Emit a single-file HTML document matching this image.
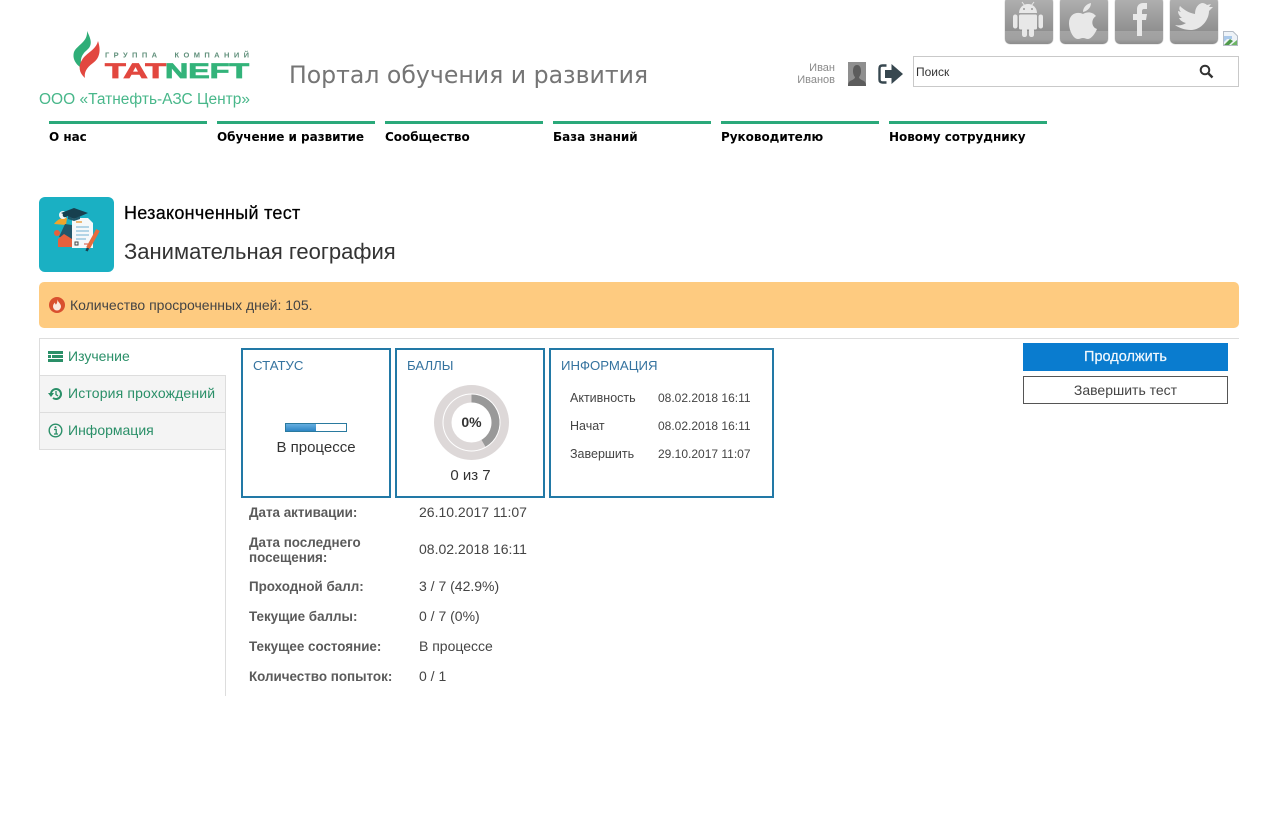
<!DOCTYPE html>
<html lang="ru"><head><meta charset="utf-8"><title>Портал обучения и развития</title>
<style>
html,body{margin:0;padding:0;background:#fff;width:1277px;height:817px;overflow:hidden}
body{position:relative;font-family:"Liberation Sans",sans-serif;color:#333}
.a{position:absolute;white-space:nowrap}
.bar{position:absolute;top:121px;width:158px;height:3px;background:#2aa97a}
.nav{position:absolute;top:128px;font:bold 12px/18px "DejaVu Sans",sans-serif;letter-spacing:-.03px;color:#000;white-space:nowrap}
.tile{position:absolute;top:-3px;width:48px;height:47px;border-radius:5px;background:linear-gradient(#b2b2b2 0,#909090 72%,#a4a4a4 72%,#a0a0a0 90%,#8c8c8c 100%);box-shadow:0 0 1px #888}
.tile svg{position:absolute;left:0;top:0}
.card{position:absolute;top:348px;height:146px;border:2px solid #2279a6;box-sizing:content-box}
.ct{position:absolute;top:358px;font-size:13.2px;line-height:16px;color:#35739f;white-space:nowrap}
.tab{position:absolute;left:39px;width:186px;height:36px;border-bottom:1px solid #ddd;border-left:1px solid #ddd;box-sizing:content-box;color:#2a8f68;font-size:14px;line-height:34px}
.tab span{position:absolute;left:28px}
.l{position:absolute;left:249px;font-weight:bold;font-size:13.4px;line-height:14.5px;color:#5a5a5a;white-space:nowrap}
.v{position:absolute;left:419px;font-size:14px;line-height:16px;color:#444;white-space:nowrap}
.i{position:absolute;font-size:12px;line-height:14px;color:#444;white-space:nowrap}
</style></head><body>

<svg class="a" style="left:60px;top:25px" width="195" height="60" viewBox="60 25 195 60">
<path d="M87 31C91 39 93 45 87 50C81 55 79 61 83 69C76 65 72 59 74 52C77 45 88 42 87 31Z" fill="#2fae78"/>
<path d="M98 41C101 50 100 58 93 63C86 68 84 73 85 78C79 73 78 66 82 60C86 53 96 50 98 41Z" fill="#e2473f"/>
<text x="105" y="57.500" font-family="Liberation Sans" font-weight="bold" font-size="7.500" fill="#5f8f7a" textLength="144" xml:space="preserve">ГРУППА  КОМПАНИЙ</text>
<text x="105" y="78" font-family="Liberation Sans" font-weight="bold" font-size="21" fill="#e2473f" stroke="#e2473f" stroke-width=".8" textLength="61" lengthAdjust="spacingAndGlyphs">TAT</text>
<text x="165" y="78" font-family="Liberation Sans" font-weight="bold" font-size="21" fill="#33b37a" stroke="#33b37a" stroke-width=".8" textLength="84" lengthAdjust="spacingAndGlyphs">NEFT</text>
</svg>
<div class="a" style="left:39px;top:91px;font-size:15.500px;line-height:18px;color:#48b78a">ООО «Татнефть-АЗС Центр»</div>
<div class="a" style="left:289px;top:60px;font:23.600px/30px 'DejaVu Sans',sans-serif;color:#757575">Портал обучения и развития</div>

<div class="tile" style="left:1005px"><svg width="48" height="47" viewBox="0 0 48 47"><g fill="#e8e8e8"><path d="M14 16a9 9 0 0 1 18 0Z"/><rect x="14" y="17.500" width="18" height="15" rx="1.500"/><rect x="8" y="17.500" width="4.500" height="14" rx="2.200"/><rect x="33.500" y="17.500" width="4.500" height="14" rx="2.200"/><rect x="17" y="31" width="5" height="9" rx="2.200"/><rect x="24" y="31" width="5" height="9" rx="2.200"/><path d="M17 5l3 4M29 5l-3 4" stroke="#e8e8e8"/></g><circle cx="19" cy="12" r="1" fill="#999"/><circle cx="27" cy="12" r="1" fill="#999"/></svg></div>
<div class="tile" style="left:1060px"><svg width="48" height="47" viewBox="0 0 48 47"><path d="M23 17C26 15 32 14 36 19C31 22 31 30 37 32C35 37 31 42 28 42C26 42 25 41 23 41C21 41 20 42 18 42C13 42 9 33 9 26C9 17 17 14 23 17ZM23 15C23 11 26 7 31 6C31 10 28 14 23 15Z" fill="#e8e8e8"/></svg></div>
<div class="tile" style="left:1115px"><svg width="48" height="47" viewBox="0 0 48 47"><path d="M22 39V23h-4v-6h4v-5c0-4 3-6 6-6h4v6h-3c-1 0-2 .5-2 2v3h5l-1 6h-4v16Z" fill="#e8e8e8"/></svg></div>
<div class="tile" style="left:1170px"><svg width="48" height="47" viewBox="0 0 48 47"><path d="M5 28c4 1 8 0 11-2-4-1-6-3-7-5h3c-3-2-4-5-4-7l3 1c-2-2-2-4-1-6 4 4 9 7 15 8 0-6 3-10 7-11 2 0 4 1 5 2l4-1-2 3 4 0-4 4c0 9-8 19-18 19-6 0-12-2-16-5Z" fill="#e8e8e8"/></svg></div>

<svg class="a" style="left:1222px;top:30px" width="17" height="17" viewBox="0 0 17 17"><path d="M1.500 1.500H11L15.500 6V15.500H1.500Z" fill="#eef3f8" stroke="#b4bcc6"/><path d="M2 15l6-6 3 2-4 4Z" fill="#4f9a4a"/><path d="M9 15l6-5v5Z" fill="#6db465"/><path d="M2 6h8v3H5L2 12Z" fill="#a9c8ea"/></svg>

<div class="a" style="left:780px;top:62px;width:55px;text-align:right;font-size:11px;line-height:12px;color:#8a8a8a">Иван<br>Иванов</div>
<svg class="a" style="left:848px;top:62px" width="18" height="24" viewBox="0 0 18 24"><rect width="18" height="24" fill="#8f8f8f"/><path d="M9 3c3 0 4 3 4 6s-1 5-2 6c0 2 3 3 5 4 1 1 2 2 2 5H0c0-3 1-4 2-5 2-1 5-2 5-4-1-1-2-3-2-6s1-6 4-6Z" fill="#5c5c5c"/></svg>
<svg class="a" style="left:878px;top:63px" width="26" height="22" viewBox="0 0 26 22"><path d="M8.500 2.500H4.500Q1.500 2.500 1.500 5.500V16.500Q1.500 19.500 4.500 19.500H8.500" fill="none" stroke="#37474f" stroke-width="2.400"/><path d="M7 7H13.500V1L25 11 13.500 21V15H7Z" fill="#37474f"/></svg>
<div class="a" style="left:913px;top:56px;width:324px;height:29px;border:1px solid #c9c9c9"></div>
<div class="a" style="left:916px;top:64px;font-size:12px;line-height:16px;color:#333">Поиск</div>
<svg class="a" style="left:1199px;top:64px" width="15" height="15" viewBox="0 0 15 15"><circle cx="6" cy="6" r="4.300" fill="none" stroke="#333" stroke-width="2"/><path d="M9.500 9.500L13.500 13.500" stroke="#333" stroke-width="2.400"/></svg>

<div class="bar" style="left:49px"></div><div class="bar" style="left:217px"></div><div class="bar" style="left:385px"></div><div class="bar" style="left:553px"></div><div class="bar" style="left:721px"></div><div class="bar" style="left:889px"></div>
<div class="nav" style="left:49px">О нас</div>
<div class="nav" style="left:217px">Обучение и развитие</div>
<div class="nav" style="left:385px">Сообщество</div>
<div class="nav" style="left:553px">База знаний</div>
<div class="nav" style="left:721px">Руководителю</div>
<div class="nav" style="left:889px">Новому сотруднику</div>

<svg class="a" style="left:39px;top:197px" width="75" height="75" viewBox="0 0 75 75">
<rect width="75" height="75" rx="6" fill="#1ab0c3"/>
<path d="M15 27q5-7 13-6l-1 7Z" fill="#f0a52c"/>
<path d="M20 40l6-13 7 1v14Z" fill="#23566a"/>
<circle cx="18" cy="36" r="3" fill="#e8603c"/>
<path d="M19 50v-8l6-5 8 5v8Z" fill="#e8603c"/>
<circle cx="24" cy="18" r="4" fill="#f3f6f7"/><circle cx="26" cy="18" r="2.300" fill="#16434f"/>
<path d="M33 21h16l5 5v25H33Z" fill="#f5f8fa"/>
<path d="M37 30h13M37 34h13M37 38h13M37 42h10" stroke="#9cc7e0" stroke-width="1.500"/>
<path d="M37 25h6" stroke="#e9a24b" stroke-width="1.500"/>
<rect x="36" y="45" width="3" height="3" fill="none" stroke="#444"/>
<path d="M45 47h6" stroke="#d6503b"/>
<path d="M22 16l13-5 14 5-14 6Z" fill="#17404f"/>
<path d="M29 19v3l6 2 6-2v-3l-6 3Z" fill="#1f5a6c"/>
<path d="M59 33l-10 18" stroke="#e56b3c" stroke-width="4"/>
<path d="M49 51l-1.500 3" stroke="#17404f" stroke-width="2.500"/>
</svg>
<div class="a" style="left:124px;top:203px;font-size:18px;line-height:20px;letter-spacing:.28px;color:#000;-webkit-text-stroke:.25px #000">Незаконченный тест</div>
<div class="a" style="left:124px;top:240px;font-size:22px;line-height:24px;color:#333">Занимательная география</div>

<div class="a" style="left:39px;top:282px;width:1200px;height:46px;background:#fecb80;border-radius:5px"></div>
<svg class="a" style="left:49px;top:297px" width="16" height="16" viewBox="0 0 16 16"><circle cx="8" cy="8" r="8" fill="#d9502e"/><path d="M8.500 2.500c.5 3 3.500 4 3.500 7a4 4 0 0 1-8 0c0-2 1-3 2-4 0 1 .5 2 1 2 1-1 1.500-3 1.500-5Z" fill="#fbe9df"/></svg>
<div class="a" style="left:70px;top:297px;font-size:14px;line-height:17px;color:#444">Количество просроченных дней: 105.</div>

<div class="a" style="left:39px;top:338px;width:1200px;height:1px;background:#ddd"></div>
<div class="tab" style="top:339px;background:#fff;width:186px"><span>Изучение</span></div>
<div class="tab" style="top:376px;background:#f4f4f4;"><span style="letter-spacing:.15px">История прохождений</span></div>
<div class="tab" style="top:413px;background:#f4f4f4;"><span>Информация</span></div>
<div class="a" style="left:225px;top:375px;width:1px;height:321px;background:#ddd"></div>
<svg class="a" style="left:48px;top:351px" width="15" height="11" viewBox="0 0 15 11"><path d="M0 0h15v3H0ZM0 4h3v3H0ZM4 4h11v3H4ZM0 8h15v3H0Z" fill="#2a8f68"/></svg>
<svg class="a" style="left:48px;top:387px" width="15" height="14" viewBox="0 0 15 14"><path d="M3 7a5 5 0 1 1 2 4" fill="none" stroke="#2a8f68" stroke-width="2"/><path d="M0 6h6L3 10Z" fill="#2a8f68"/><path d="M8 4v3.500l2 1.500" fill="none" stroke="#2a8f68" stroke-width="1.300"/></svg>
<svg class="a" style="left:48px;top:423px" width="15" height="15" viewBox="0 0 15 15"><circle cx="7.500" cy="7.500" r="6.300" fill="none" stroke="#2a8f68" stroke-width="1.400"/><path d="M6 6.500h2.200V11M6 11h4" fill="none" stroke="#2a8f68" stroke-width="1.300"/><circle cx="7.500" cy="4.200" r="1" fill="#2a8f68"/></svg>

<div class="card" style="left:241px;width:146px"></div>
<div class="card" style="left:395px;width:146px"></div>
<div class="card" style="left:549px;width:221px"></div>
<div class="ct" style="left:253px">СТАТУС</div>
<div class="ct" style="left:407px">БАЛЛЫ</div>
<div class="ct" style="left:561px">ИНФОРМАЦИЯ</div>

<div class="a" style="left:285px;top:423px;width:60px;height:7px;border:1px solid #2a7a9f;background:#fff"></div>
<div class="a" style="left:286px;top:424px;width:30px;height:7px;background:linear-gradient(#66aee0,#2e86c4)"></div>
<div class="a" style="left:241px;top:439px;width:150px;text-align:center;font-size:15px;line-height:18px;color:#333">В процессе</div>

<svg class="a" style="left:433px;top:384px" width="77" height="77" viewBox="-38.500 -38.500 77 77">
<circle r="37.500" fill="#ddd8d8"/><circle r="29" fill="#fff"/><circle r="28" fill="#ddd8d8"/>
<path d="M0-28A28 28 0 0 1 14 24.250L10 17.320A20 20 0 0 0 0-20Z" fill="#999"/>
<circle r="20" fill="#fff"/>
</svg>
<div class="a" style="left:433px;top:414px;width:77px;text-align:center;font-weight:bold;font-size:14px;line-height:16px;color:#333">0%</div>
<div class="a" style="left:395px;top:467px;width:151px;text-align:center;font-size:15px;line-height:18px;color:#333">0 из 7</div>

<div class="i" style="left:570px;top:391px;font-size:12.500px">Активность</div><div class="i" style="left:658px;top:391px">08.02.2018 16:11</div>
<div class="i" style="left:570px;top:419px;font-size:12.500px">Начат</div><div class="i" style="left:658px;top:419px">08.02.2018 16:11</div>
<div class="i" style="left:570px;top:447px;font-size:12.500px">Завершить</div><div class="i" style="left:658px;top:447px">29.10.2017 11:07</div>

<div class="l" style="top:506px">Дата активации:</div><div class="v" style="top:504px">26.10.2017 11:07</div>
<div class="l" style="top:536px">Дата последнего<br>посещения:</div><div class="v" style="top:541px">08.02.2018 16:11</div>
<div class="l" style="top:580px">Проходной балл:</div><div class="v" style="top:578px">3 / 7 (42.9%)</div>
<div class="l" style="top:610px">Текущие баллы:</div><div class="v" style="top:608px">0 / 7 (0%)</div>
<div class="l" style="top:640px">Текущее состояние:</div><div class="v" style="top:638px">В процессе</div>
<div class="l" style="top:670px">Количество попыток:</div><div class="v" style="top:668px">0 / 1</div>

<div class="a" style="left:1023px;top:343px;width:205px;height:28px;background:#0a7ccf;color:#f2f9fe;text-align:center;font-size:14.500px;line-height:28px;-webkit-text-stroke:.2px #f2f9fe">Продолжить</div>
<div class="a" style="left:1023px;top:376px;width:203px;height:26px;border:1px solid #555;color:#444;text-align:center;font-size:14px;line-height:27px">Завершить тест</div>
</body></html>
